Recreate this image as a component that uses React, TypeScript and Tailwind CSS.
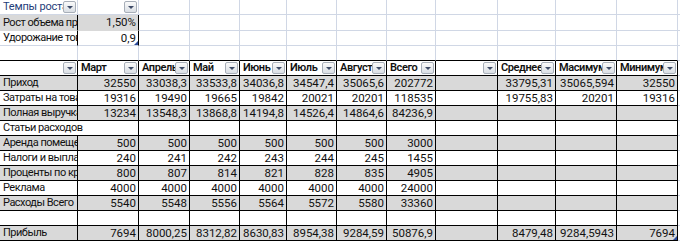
import type { ReactNode } from "react";

const COLS =
  "grid grid-cols-[78px_61px_51px_50px_47px_50px_50px_49px_62px_58px_61px_61px_1fr]";

const headers = ["", "Март", "Апрель", "Май", "Июнь", "Июль", "Август", "Всего", "", "Среднее", "Масимум", "Минимум"];

const rows: { label: string; values: string[]; gray: boolean; spanLabel?: boolean }[] = [
  { label: "Приход", gray: true, values: ["32550", "33038,3", "33533,8", "34036,8", "34547,4", "35065,6", "202772", "", "33795,31", "35065,594", "32550"] },
  { label: "Затраты на товар", gray: false, values: ["19316", "19490", "19665", "19842", "20021", "20201", "118535", "", "19755,83", "20201", "19316"] },
  { label: "Полная выручка", gray: true, values: ["13234", "13548,3", "13868,8", "14194,8", "14526,4", "14864,6", "84236,9", "", "", "", ""] },
  { label: "Статьи расходов", gray: false, spanLabel: true, values: ["", "", "", "", "", "", "", "", "", ""] },
  { label: "Аренда помещения", gray: true, values: ["500", "500", "500", "500", "500", "500", "3000", "", "", "", ""] },
  { label: "Налоги и выплаты", gray: false, values: ["240", "241", "242", "243", "244", "245", "1455", "", "", "", ""] },
  { label: "Проценты по кредиту", gray: true, values: ["800", "807", "814", "821", "828", "835", "4905", "", "", "", ""] },
  { label: "Реклама", gray: false, values: ["4000", "4000", "4000", "4000", "4000", "4000", "24000", "", "", "", ""] },
  { label: "Расходы Всего", gray: true, values: ["5540", "5548", "5556", "5564", "5572", "5580", "33360", "", "", "", ""] },
  { label: "", gray: false, values: ["", "", "", "", "", "", "", "", "", "", ""] },
  { label: "Прибыль", gray: true, values: ["7694", "8000,25", "8312,82", "8630,83", "8954,38", "9284,59", "50876,9", "", "8479,48", "9284,5943", "7694"] },
];

function Dropdown() {
  return (
    <div className="mr-px flex h-[12px] w-[13px] shrink-0 items-center justify-center rounded-[2px] border border-[#a7aeb8] bg-linear-to-b from-[#fafafa] to-[#dadfe5]">
      <svg width="6" height="3" viewBox="0 0 6 3">
        <path d="M0 0h6L3 3z" fill="#3d4a66" />
      </svg>
    </div>
  );
}

function Handle() {
  return (
    <svg className="absolute bottom-0 right-0" width="4" height="4" viewBox="0 0 4 4">
      <path d="M4 0v4H0z" fill="#2b4a9a" />
    </svg>
  );
}

function Blank({ last, h = "h-[15px]", black }: { last?: boolean; h?: string; black?: boolean }) {
  return (
    <div
      className={`${h} border-b ${last ? "" : "border-r"} ${black ? "border-b-black" : "border-b-[#d0d7e5]"} border-r-[#d0d7e5]`}
    />
  );
}

function Cell({
  children,
  gray,
  right,
  span,
  handle,
}: {
  children?: ReactNode;
  gray?: boolean;
  right?: boolean;
  span?: boolean;
  handle?: boolean;
}) {
  return (
    <div
      className={`relative h-[15px] overflow-hidden whitespace-nowrap border-b border-r border-black leading-[14px] ${
        gray ? "bg-[#d9d9d9]" : "bg-white"
      } ${right ? "pr-[2px] text-right text-[11.5px]" : "pl-[3px] text-[11px] tracking-[-0.5px]"} ${span ? "col-span-2" : ""}`}
    >
      {children}
      {handle && <Handle />}
    </div>
  );
}

export default function App() {
  return (
    <div className="h-[242px] w-[680px] overflow-hidden bg-white text-[#111] [font-family:Roboto,'Noto_Sans',sans-serif]">
      <div className={COLS}>
        {/* row 1 */}
        <div className="flex h-[15px] items-center border-b border-r border-[#d0d7e5] bg-white">
          <span className="flex-1 overflow-hidden whitespace-nowrap pl-[3px] text-[11px] leading-[14px] tracking-[-0.2px] text-[#1f3d7a]">
            Темпы роста
          </span>
          <Dropdown />
        </div>
        <div className="flex h-[15px] items-center justify-end border-b border-r border-[#d0d7e5] bg-white">
          <Dropdown />
        </div>
        {Array.from({ length: 11 }).map((_, i) => (
          <Blank key={`r1-${i}`} last={i === 10} />
        ))}

        {/* row 2 */}
        <div className="h-[16px] overflow-hidden whitespace-nowrap border-b border-r border-b-[#d9d9d9] border-r-black bg-[#d9d9d9] pl-[3px] text-[11px] leading-[15px] tracking-[-0.5px]">
          Рост объема продаж
        </div>
        <div className="h-[16px] border-b border-r border-b-[#d9d9d9] border-r-black bg-[#d9d9d9] pr-[2px] text-right text-[11.5px] leading-[15px]">
          1,50%
        </div>
        {Array.from({ length: 11 }).map((_, i) => (
          <Blank key={`r2-${i}`} last={i === 10} h="h-[16px]" />
        ))}

        {/* row 3 */}
        <div className="h-[15px] overflow-hidden whitespace-nowrap border-b border-r border-b-[#d0d7e5] border-r-black pl-[3px] text-[11px] leading-[14px] tracking-[-0.5px]">
          Удорожание товара
        </div>
        <div className="relative h-[15px] border-b border-r border-b-[#d0d7e5] border-r-black pr-[2px] text-right text-[11.5px] leading-[14px]">
          0,9
          <Handle />
        </div>
        {Array.from({ length: 11 }).map((_, i) => (
          <Blank key={`r3-${i}`} last={i === 10} />
        ))}

        {/* row 4 */}
        {Array.from({ length: 13 }).map((_, i) => (
          <Blank key={`r4-${i}`} last={i === 12} black={i < 12} />
        ))}

        {/* table header */}
        {headers.map((h, i) => (
          <div
            key={`h-${i}`}
            className="flex h-[15px] items-center overflow-hidden border-b border-r border-black bg-white"
          >
            <span className="flex-1 overflow-hidden whitespace-nowrap pl-[3px] text-[11px] font-semibold leading-[14px] tracking-[-0.4px]">
              {h}
            </span>
            <Dropdown />
          </div>
        ))}
        <Blank last />

        {/* table body */}
        {rows.map((r, ri) => (
          <div key={`row-${ri}`} className="contents">
            <Cell gray={r.gray} span={r.spanLabel}>
              {r.label}
            </Cell>
            {r.values.map((v, vi) => (
              <Cell
                key={`c-${ri}-${vi}`}
                gray={r.gray}
                right
                handle={ri === rows.length - 1 && vi === r.values.length - 1}
              >
                {v}
              </Cell>
            ))}
            <Blank last />
          </div>
        ))}
      </div>
    </div>
  );
}
